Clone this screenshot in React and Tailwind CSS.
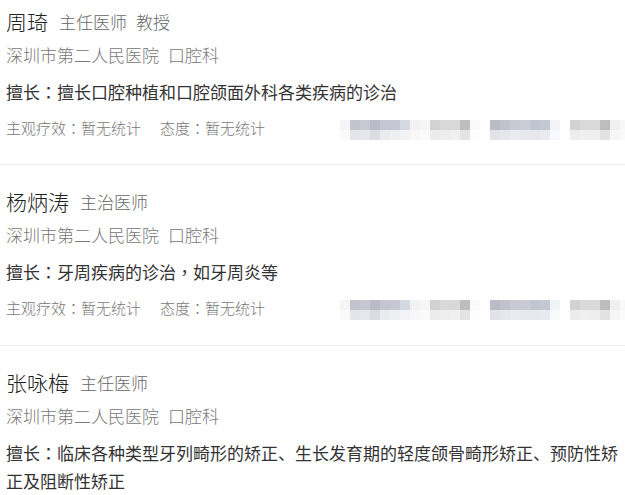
import React from "react";

const doctors = [
  {
    name: "周琦",
    titles: ["主任医师", "教授"],
    hospital: "深圳市第二人民医院",
    dept: "口腔科",
    skill: ["擅长口腔种植和口腔颌面外科各类疾病的诊治"],
    stats: true,
  },
  {
    name: "杨炳涛",
    titles: ["主治医师"],
    hospital: "深圳市第二人民医院",
    dept: "口腔科",
    skill: ["牙周疾病的诊治", "如牙周炎等"],
    stats: true,
  },
  {
    name: "张咏梅",
    titles: ["主任医师"],
    hospital: "深圳市第二人民医院",
    dept: "口腔科",
    skill: ["临床各种类型牙列畸形的矫正、生长发育期的轻度颌骨畸形矫正、预防性矫正及阻断性矫正"],
    stats: false,
  },
];

// blurred (mosaic) block on the right of the stats row
const topRow = [
  "bg-[#f5f5f7]", "bg-[#c2c4cd]", "bg-[#c6c8d2]", "bg-[#b9bcc7]", "bg-[#c4c7d2]", "bg-[#c5c8d3]", "bg-[#d4d8e0]",
  "bg-[#f2f2f4]", "bg-[#f6f6f6]", "bg-[#d2d2d4]", "bg-[#d8d8d8]", "bg-[#d8d8d8]", "bg-[#bdbdc0]", "bg-[#fafafa]",
  "bg-white", "bg-[#b9bbc6]", "bg-[#c0c2cc]", "bg-[#c7cad2]", "bg-[#c9ccd4]", "bg-[#c0c5d0]", "bg-[#c3c8d2]",
  "bg-[#f2f3f6]", "bg-white", "bg-[#d2d2d4]", "bg-[#dadada]", "bg-[#dadada]", "bg-[#bdbdbf]", "bg-[#f0f0f0]",
];
const bottomRow = [
  "bg-[#fafafa]", "bg-[#e4e5ea]", "bg-[#e6e7ec]", "bg-[#dcdde3]", "bg-[#eaebef]", "bg-[#eeeff2]", "bg-[#f2f3f6]",
  "bg-[#f8f8f8]", "bg-[#fafafa]", "bg-[#ececec]", "bg-[#eeeeee]", "bg-[#f0f0f0]", "bg-[#e4e4e6]", "bg-[#fdfdfd]",
  "bg-white", "bg-[#e2e3e8]", "bg-[#e6e7ec]", "bg-[#eaebef]", "bg-[#e8e9ee]", "bg-[#e6e8ee]", "bg-[#e8eaef]",
  "bg-[#f8f9fb]", "bg-white", "bg-[#ececee]", "bg-[#efefef]", "bg-[#eeeeee]", "bg-[#e2e2e4]", "bg-[#f6f6f6]",
];

// centred full-width punctuation, as in the screenshot
const Punct = ({ ch }) => <span className="font-['Noto_Sans_CJK_TC',sans-serif]">{ch}</span>;

function Mosaic() {
  return (
    <div className="ml-auto mt-[4px] flex flex-col">
      <div className="flex">
        {topRow.map((c, i) => (
          <div key={i} className={`w-[10px] h-[10px] ${c}`} />
        ))}
        <div className="w-[5px] h-[10px] bg-[#f8f8f8]" />
      </div>
      <div className="flex">
        {bottomRow.map((c, i) => (
          <div key={i} className={`w-[10px] h-[10px] ${c}`} />
        ))}
        <div className="w-[5px] h-[10px] bg-[#fbfbfb]" />
      </div>
    </div>
  );
}

function DoctorCard({ doc, first }) {
  return (
    <div
      className={
        first
          ? "pl-[6px] pt-[7px] pb-[24px] border-b border-[#ededed]"
          : "pl-[6px] pt-[22px] pb-[25px] border-b border-[#ededed]"
      }
    >
      <div className="flex items-center h-[30px]">
        <span className="text-[21px] font-light text-[#222]">{doc.name}</span>
        {doc.titles.map((t, i) => (
          <span key={t} className={i === 0 ? "ml-[11px] text-[17px] font-light text-[#666]" : "ml-[9px] text-[17px] font-light text-[#666]"}>
            {t}
          </span>
        ))}
      </div>
      <div className="mt-[3px] flex leading-[30px] text-[17px] font-light text-[#777]">
        <span>{doc.hospital}</span>
        <span className="ml-[9px]">{doc.dept}</span>
      </div>
      <p className="mt-[8px] leading-[28px] text-[17px] text-[#333]">
        擅长<Punct ch="：" />
        {doc.skill.map((s, i) => (
          <React.Fragment key={i}>
            {i > 0 && <Punct ch="，" />}
            {s}
          </React.Fragment>
        ))}
      </p>
      {doc.stats && (
        <div className="mt-[10px] flex items-start leading-[24px] text-[15px] font-light text-[#777]">
          <span>主观疗效<Punct ch="：" />暂无统计</span>
          <span className="ml-[19px]">态度<Punct ch="：" />暂无统计</span>
          <Mosaic />
        </div>
      )}
    </div>
  );
}

export default function App() {
  return (
    <div className="w-[625px] h-[495px] overflow-hidden bg-white font-['Noto_Sans_CJK_SC','Noto_Sans',sans-serif]">
      {doctors.map((d, i) => (
        <DoctorCard key={d.name} doc={d} first={i === 0} />
      ))}
    </div>
  );
}
